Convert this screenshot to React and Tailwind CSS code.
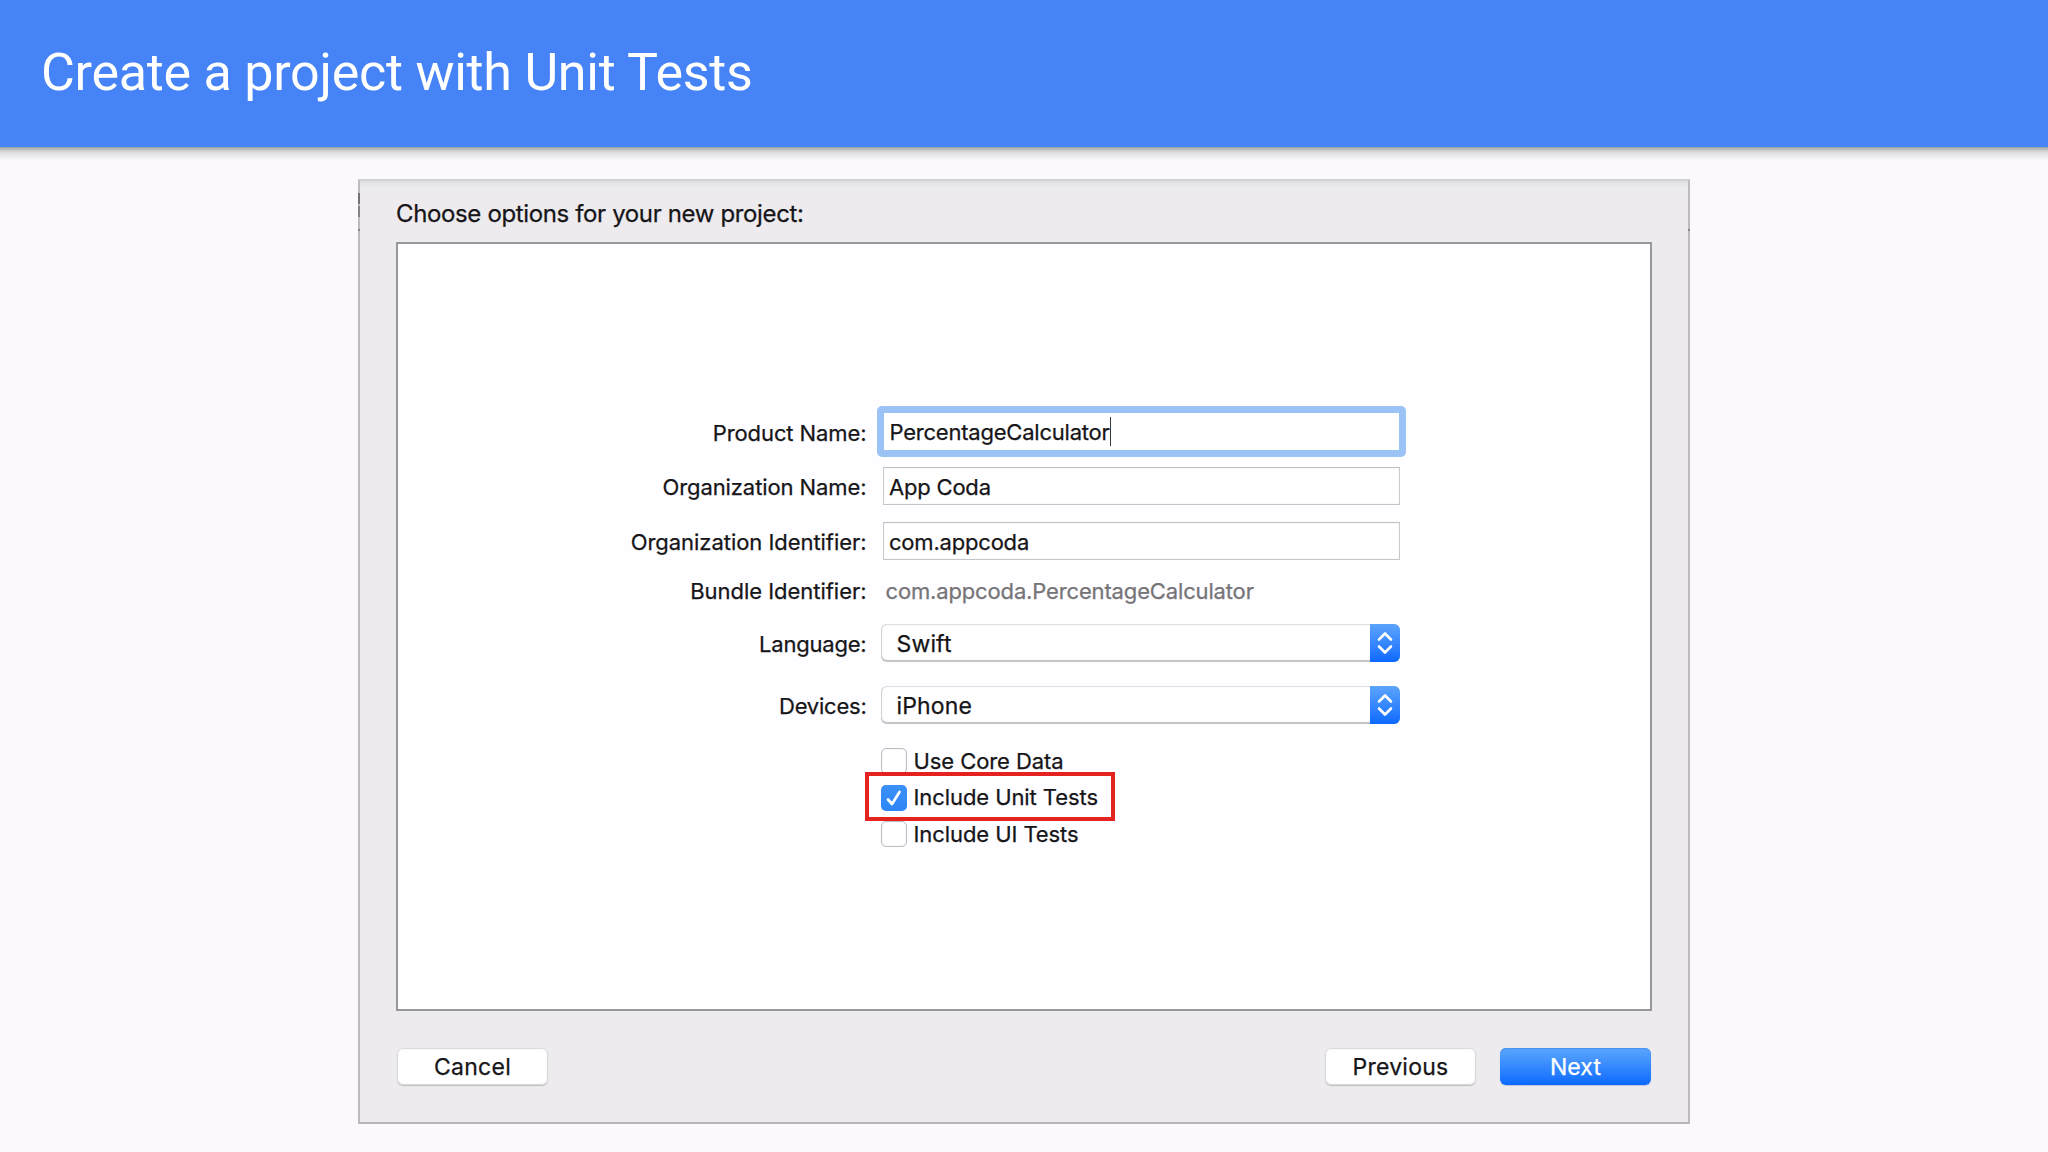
import { clsx } from 'clsx';

const Row = ({ label, className, labelClass, children }) => (
  <div className={clsx('flex items-center', className)}>
    <span className={clsx('w-[470px] shrink-0 pr-[1.5px] text-right', labelClass)}>{label}</span>
    {children}
  </div>
);

const TextInput = ({ value }) => (
  <div className="ml-[15px] flex h-[38px] w-[517px] items-center border border-t-[#c0bfc1] border-x-[#cbcacc] border-b-[#c6c5c7] bg-white pl-[5px] shadow-[inset_0_0_1px_#cfced0] tracking-[-0.2px]">
    <span className="pt-[2px]">{value}</span>
  </div>
);

const Select = ({ value }) => (
  <div className="ml-[13px] flex h-[38px] w-[519px] overflow-hidden rounded-[6px] bg-white shadow-[inset_0_1px_1px_#dddcde,inset_0_-2px_1px_#c3c2c4,inset_1px_0_1px_#d0cfd1]">
    <span className="flex flex-1 items-center pt-px pl-[15.5px] text-[23px] tracking-[0.15px]">{value}</span>
    <span className="flex w-[30px] items-center justify-center bg-linear-to-b from-[#5ba3fb] to-[#0a69fe]">
      <svg width="16" height="24" viewBox="0 0 16 24" fill="none" stroke="#fff" strokeWidth="2.6" strokeLinecap="round" strokeLinejoin="round">
        <path d="M2 8.500 8 2.500l6 6M2 15.500 8 21.500l6-6" />
      </svg>
    </span>
  </div>
);

const Checkbox = ({ label, checked, highlighted, className }) => (
  <div className={clsx('relative flex h-[26px] items-center', className)}>
    {checked ? (
      <span className="flex h-[26px] w-[26px] items-center justify-center rounded-[5px] bg-linear-to-b from-[#3b90f8] to-[#2d86f8]">
        <svg width="26" height="26" viewBox="0 0 26 26" fill="none" stroke="#fff" strokeWidth="2.7" strokeLinecap="round" strokeLinejoin="round">
          <path d="M7 14.500 11 19 18.500 7" />
        </svg>
      </span>
    ) : (
      <span className="h-[26px] w-[26px] rounded-[5px] border border-[#bfbec0] bg-white shadow-[inset_0_0_1px_#b3b2b4]" />
    )}
    <span className={clsx('ml-[6.5px] tracking-[-0.08px]', checked ? '-mt-[2px]' : '-mt-px')}>{label}</span>
    {highlighted && (
      <span className="absolute -top-[13px] -left-[16px] h-[49px] w-[250px] border-4 border-[#e42320]" />
    )}
  </div>
);

const Button = ({ primary, children }) => (
  <button
    className={clsx(
      'h-[37px] w-[151px] rounded-[6px] text-[23px] [-webkit-text-stroke:0.25px]',
      primary
        ? 'bg-linear-to-b from-[#5aa6fc] to-[#0768ff] text-white shadow-[inset_0_1px_1px_#4792f0,0_1px_1px_#b9c6dc] tracking-[0.12px]'
        : 'bg-white shadow-[inset_0_0_1px_1px_#d6d5d7,0_1px_1px_#bebdbf] tracking-[0.25px]'
    )}
  >
    {children}
  </button>
);

export default function App() {
  return (
    <div className="flex h-[1152px] w-[2048px] flex-col overflow-hidden bg-[#fbf9fd] font-['Inter',sans-serif] text-[22px] leading-[30px] text-[#161518]">
      <header className="flex h-[147px] shrink-0 items-center bg-[#4583f6] pb-[2px] pl-[41px]">
        <h1 className="font-['Roboto',sans-serif] text-[52px] leading-none tracking-[-0.25px] text-white">
          Create a project with Unit Tests
        </h1>
      </header>
      <div className="h-[14px] shrink-0 bg-linear-to-b from-[#98a3a2] via-[#dcdbdd] via-35% to-[#fbf9fd]" />

      <main className="relative mt-[18px] ml-[358px] flex h-[945px] w-[1332px] shrink-0 flex-col border-2 border-t-[#d2d1d3] border-x-[#bcbbbd] border-b-[#b5b4b6] bg-[#edebee] bg-linear-to-b from-[#e0dfe1] to-[#edebee] to-[8px] pl-[36px] [-webkit-text-stroke:0.25px]">
        {/* dark ticks on the sheet's side edges */}
        <span className="absolute top-[12px] -left-[2px] h-[11px] w-[2px] bg-[#747375]" />
        <span className="absolute top-[25px] -left-[2px] h-[11px] w-[2px] bg-[#848385]" />
        <span className="absolute top-[48px] -left-[2px] h-[2px] w-[2px] bg-[#848385]" />
        <span className="absolute top-[48px] -right-[2px] h-[2px] w-[2px] bg-[#848385]" />

        <p className="flex h-[61px] shrink-0 items-center pt-[4px] text-[24px] tracking-[-0.36px]">
          Choose options for your new project:
        </p>

        <section className="flex h-[769px] w-[1256px] shrink-0 flex-col border-2 border-[#98979a] bg-[#fefdff] pt-[162px]">
          <Row label="Product Name:" className="h-[51px] tracking-[-0.09px]" labelClass="pt-[2px]">
            <div className="ml-[9px] flex h-[51px] w-[529px] items-center rounded-[5px] border-[7px] border-[#9cc3f5] bg-white pl-[5.5px] tracking-[-0.22px]">
              <span className="pt-px">PercentageCalculator</span>
              <span className="h-[29px] w-[1.5px] bg-[#3a3a3c]" />
            </div>
          </Row>
          <Row label="Organization Name:" className="mt-[10px] tracking-[-0.09px]" labelClass="pt-[2px]">
            <TextInput value="App Coda" />
          </Row>
          <Row label="Organization Identifier:" className="mt-[17px] tracking-[-0.05px]" labelClass="pt-[2px]">
            <TextInput value="com.appcoda" />
          </Row>
          <Row label="Bundle Identifier:" className="mt-[16px] tracking-[-0.03px]">
            <span className="ml-[17.5px] tracking-[-0.15px] text-[#757477]">com.appcoda.PercentageCalculator</span>
          </Row>
          <Row label="Language:" className="mt-[18px] tracking-[-0.2px]" labelClass="pt-px">
            <Select value="Swift" />
          </Row>
          <Row label="Devices:" className="mt-[24px] tracking-[-0.23px]" labelClass="pt-px">
            <Select value="iPhone" />
          </Row>
          <div className="mt-[24px] ml-[483px] flex flex-col">
            <Checkbox label="Use Core Data" />
            <Checkbox label="Include Unit Tests" className="mt-[11px]" checked highlighted />
            <Checkbox label="Include UI Tests" className="mt-[10px]" />
          </div>
        </section>

        <footer className="mt-[37px] flex w-[1255px] items-center pl-px">
          <Button>Cancel</Button>
          <div className="ml-auto flex gap-[24px]">
            <Button>Previous</Button>
            <Button primary>Next</Button>
          </div>
        </footer>
      </main>
    </div>
  );
}
